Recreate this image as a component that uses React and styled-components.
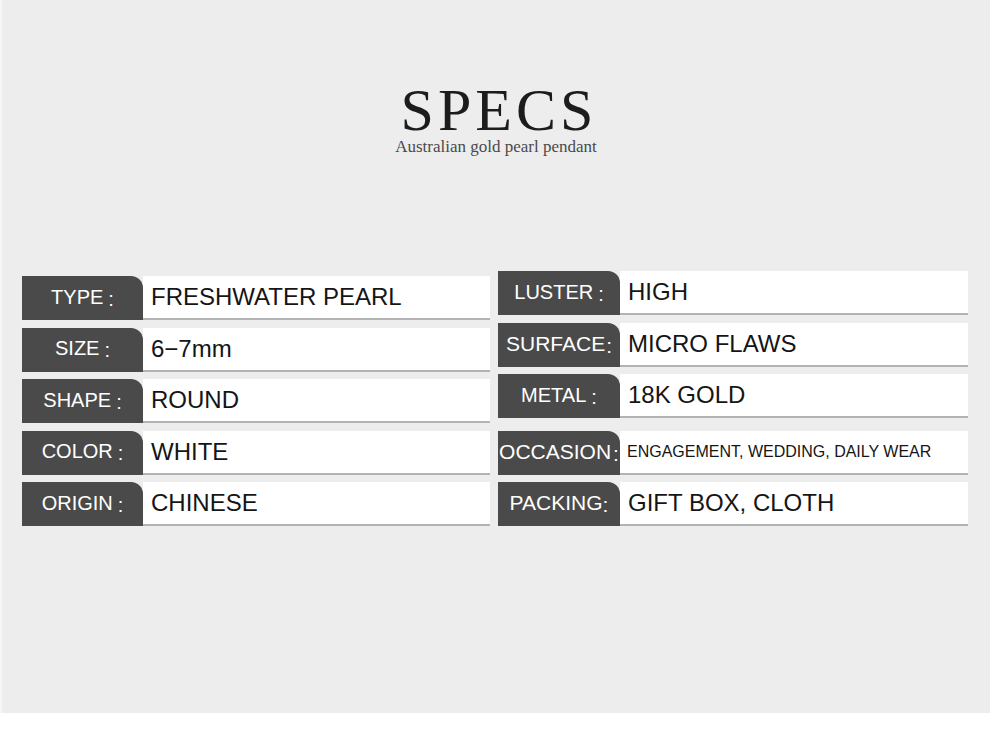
import React from 'react';
import styled, { createGlobalStyle } from 'styled-components';

const GlobalStyle = createGlobalStyle`
  html, body {
    margin: 0;
    padding: 0;
    background: #ffffff;
  }
`;

const Page = styled.div`
  width: 990px;
  height: 732px;
  background: #ffffff;
  overflow: hidden;
`;

const Panel = styled.div`
  height: 713px;
  background: #ededed;
  border-left: 2px solid #f6f6f6;
  box-sizing: border-box;
  display: flex;
  flex-direction: column;
  align-items: center;
`;

const Heading = styled.div`
  margin-top: 85px;
  display: flex;
  flex-direction: column;
  align-items: center;
  font-family: "Liberation Serif", "DejaVu Serif", serif;
`;

const Title = styled.h1`
  margin: 0 0 0 6px;
  font-weight: normal;
  font-size: 60px;
  line-height: 50px;
  letter-spacing: 4px;
  color: #1c1c1c;
`;

const Subtitle = styled.div`
  margin-top: 3px;
  font-size: 17px;
  line-height: 18px;
  color: #4a4a4a;
`;

const Columns = styled.div`
  margin-top: 115px;
  align-self: stretch;
  display: grid;
  grid-template-columns: 468px 470px;
  column-gap: 8px;
  padding-left: 20px;
  align-items: start;
`;

const Column = styled.div`
  display: flex;
  flex-direction: column;
  gap: 7.5px;
  margin-top: ${p => p.$shift || 0}px;
`;

const Row = styled.div`
  display: flex;
  height: 44px;
  margin-top: ${p => p.$extra || 0}px;
`;

const Label = styled.div`
  flex: 0 0 ${p => p.$width || 121}px;
  min-width: 0;
  background: #4a4a4a;
  border-top-right-radius: 12px;
  color: #ffffff;
  font-family: "Liberation Sans", Arial, sans-serif;
  font-size: ${p => p.$size || 20}px;
  display: flex;
  align-items: center;
  justify-content: center;
  white-space: nowrap;
  padding-bottom: 2px;
  box-sizing: border-box;
`;

const Colon = styled.span`
  margin-left: ${p => p.$gap ?? 5}px;
  position: relative;
  top: 2px;
`;

const Value = styled.div`
  flex: 1;
  min-width: 0;
  background: #ffffff;
  border-bottom: 2px solid #b3b3b3;
  color: #151515;
  font-family: "Liberation Sans", Arial, sans-serif;
  font-size: ${p => p.$size || 24}px;
  display: flex;
  align-items: center;
  padding-left: ${p => p.$pad || 8}px;
  white-space: nowrap;
`;

const left = [
  { label: 'TYPE', value: 'FRESHWATER PEARL' },
  { label: 'SIZE', value: '6−7mm' },
  { label: 'SHAPE', value: 'ROUND' },
  { label: 'COLOR', value: 'WHITE' },
  { label: 'ORIGIN', value: 'CHINESE' },
];

const right = [
  { label: 'LUSTER', value: 'HIGH' },
  { label: 'SURFACE', value: 'MICRO FLAWS', labelSize: 21, gap: 1 },
  { label: 'METAL', value: '18K GOLD' },
  { label: 'OCCASION', value: 'ENGAGEMENT, WEDDING, DAILY WEAR', size: 16, extra: 5, labelSize: 21, gap: 2, pad: 7 },
  { label: 'PACKING', value: 'GIFT BOX, CLOTH', labelSize: 21, gap: 0 },
];

function SpecRow({ item, labelWidth }) {
  return (
    <Row $extra={item.extra}>
      <Label $width={labelWidth} $size={item.labelSize}>
        {item.label}
        <Colon $gap={item.gap}>:</Colon>
      </Label>
      <Value $size={item.size} $pad={item.pad}>{item.value}</Value>
    </Row>
  );
}

export default function App() {
  return (
    <Page>
      <GlobalStyle />
      <Panel>
        <Heading>
          <Title>SPECS</Title>
          <Subtitle>Australian gold pearl pendant</Subtitle>
        </Heading>
        <Columns>
          <Column $shift={5}>
            {left.map(item => <SpecRow key={item.label} item={item} labelWidth={121} />)}
          </Column>
          <Column>
            {right.map(item => <SpecRow key={item.label} item={item} labelWidth={122} />)}
          </Column>
        </Columns>
      </Panel>
    </Page>
  );
}
